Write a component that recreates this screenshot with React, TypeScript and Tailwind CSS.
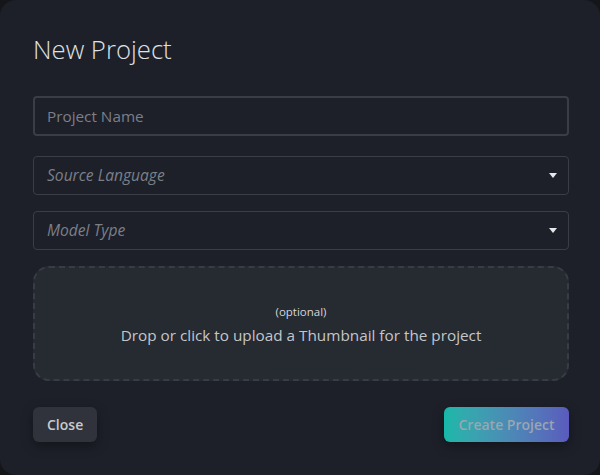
export default function App() {
  return (
    <div className="w-[600px] h-[475px] bg-[#15161a]" style={{ fontFamily: '"Open Sans", "Noto Sans", sans-serif' }}>
      <div className="w-full h-full rounded-[16px] bg-[#1d2029] pl-[33px] pr-[31px] pt-[33px] flex flex-col">
        {/* Title */}
        <h2 className="text-[25.7px] font-light leading-[34px] text-[#dfe1e4]">New Project</h2>

        {/* Fields */}
        <input
          className="mt-[29px] h-[40px] w-full rounded-[4px] border-2 border-[#393d46] bg-transparent px-[12px] text-[15.3px] text-[#dfe1e4] placeholder:text-[#7b7f88] outline-none"
          placeholder="Project Name"
        />

        <div className="mt-[20px] flex flex-col gap-[16px]">
          {["Source Language", "Model Type"].map((label) => (
            <div
              key={label}
              className="h-[39px] w-full rounded-[4px] border border-[#393d46] px-[13px] flex items-center justify-between"
            >
              <span className="text-[15.6px] italic text-[#7b7f88]">{label}</span>
              <svg width="8" height="5" viewBox="0 0 8 5" className="mr-[-2px]">
                <path d="M0 0 H8 L4 5 Z" fill="#e6e7ea" />
              </svg>
            </div>
          ))}
        </div>

        {/* Drop zone */}
        <div className="mt-[16px] h-[115px] w-full rounded-[16px] border-2 border-dashed border-[#383c45] bg-[#262a31] flex flex-col items-center justify-center">
          <span className="text-[11.5px] leading-[16px] text-[#d4d6da] mt-[2px]">(optional)</span>
          <span className="text-[15.3px] leading-[22px] text-[#c4c6ca] mt-[4px]">
            Drop or click to upload a Thumbnail for the project
          </span>
        </div>

        {/* Actions */}
        <div className="mt-[26px] flex justify-between">
          <button className="h-[35px] px-[14px] rounded-[6px] bg-[#30333b] text-[14px] font-semibold text-[#c8cacd] shadow-[0_4px_12px_rgba(0,0,0,0.35)]">
            Close
          </button>
          <button className="h-[35px] w-[125px] rounded-[6px] bg-gradient-to-r from-[#16b8a9] to-[#5a5bbd] text-[14px] font-semibold text-[#9aa6b0] shadow-[0_4px_12px_rgba(0,0,0,0.35)]">
            Create Project
          </button>
        </div>
      </div>
    </div>
  );
}
